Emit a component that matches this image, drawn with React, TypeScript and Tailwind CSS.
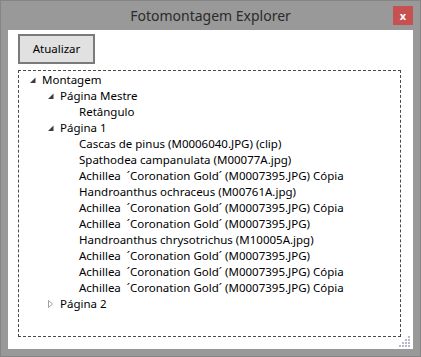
import React from "react";

type Node = { label: string; level: number; state?: "open" | "closed" };

const rows: Node[] = [
  { label: "Montagem", level: 0, state: "open" },
  { label: "Página Mestre", level: 1, state: "open" },
  { label: "Retângulo", level: 2 },
  { label: "Página 1", level: 1, state: "open" },
  { label: "Cascas de pinus (M0006040.JPG) (clip)", level: 2 },
  { label: "Spathodea campanulata (M00077A.jpg)", level: 2 },
  { label: "Achillea  ´Coronation Gold´ (M0007395.JPG) Cópia", level: 2 },
  { label: "Handroanthus ochraceus (M00761A.jpg)", level: 2 },
  { label: "Achillea  ´Coronation Gold´ (M0007395.JPG) Cópia", level: 2 },
  { label: "Achillea  ´Coronation Gold´ (M0007395.JPG)", level: 2 },
  { label: "Handroanthus chrysotrichus (M10005A.jpg)", level: 2 },
  { label: "Achillea  ´Coronation Gold´ (M0007395.JPG)", level: 2 },
  { label: "Achillea  ´Coronation Gold´ (M0007395.JPG) Cópia", level: 2 },
  { label: "Achillea  ´Coronation Gold´ (M0007395.JPG) Cópia", level: 2 },
  { label: "Página 2", level: 1, state: "closed" },
];

// indent per tree level, in px
const pad = ["pl-[8px]", "pl-[26px]", "pl-[45px]"];

function Glyph({ state }: { state?: "open" | "closed" }) {
  if (state === "open") {
    return (
      <svg width="12" height="16" viewBox="0 0 12 16">
        <path d="M8.5 5.5 L8.5 11 L3 11 Z" fill="#3c3c3c" />
      </svg>
    );
  }
  if (state === "closed") {
    return (
      <svg width="12" height="16" viewBox="0 0 12 16">
        <path d="M3.5 4.5 L7.5 8 L3.5 11.5 Z" fill="none" stroke="#a0a0a0" />
      </svg>
    );
  }
  return <span className="w-[12px]" />;
}

function ResizeGrip() {
  const dots = [
    [9, 1],
    [6, 4], [9, 4],
    [3, 7], [6, 7], [9, 7],
    [0, 10], [3, 10], [6, 10], [9, 10],
  ];
  return (
    <svg width="12" height="12" viewBox="0 0 12 12" className="absolute right-[2px] bottom-[2px]">
      {dots.map(([x, y], i) => (
        <rect key={i} x={x} y={y} width="2" height="2" fill="#b8b8c8" />
      ))}
    </svg>
  );
}

export default function App() {
  return (
    <div className="w-[421px] h-[357px] bg-[#999999] border border-[#858585] flex flex-col font-['Noto_Sans',sans-serif]">
      {/* title bar */}
      <div className="h-[29px] relative flex items-center justify-center">
        <span className="text-[14px] text-[#2b2b2b] leading-none pt-[1px]">Fotomontagem Explorer</span>
        <div className="absolute right-[7px] top-[5px] w-[20px] h-[19px] bg-[#c75050] flex items-center justify-center">
          <span className="text-white text-[11px] font-bold leading-none -mt-[1px]">x</span>
        </div>
      </div>

      {/* client area */}
      <div className="flex-1 mx-[7px] mb-[7px] bg-white relative flex flex-col pt-[4px] pl-[10px] pr-[12px] pb-[12px]">
        <button className="w-[77px] h-[30px] bg-[#e1e1e1] border-2 border-[#7a7a7a] text-[11.5px] text-black">
          Atualizar
        </button>
        <div className="mt-[6px] flex-1 border border-dashed border-[#4a4a4a] pt-[1px] text-[11.5px] text-black">
          {rows.map((r, i) => (
            <div key={i} className={`h-[16px] flex items-center ${pad[r.level]}`}>
              <Glyph state={r.state} />
              <span className="ml-[3px] leading-[16px] whitespace-pre">{r.label}</span>
            </div>
          ))}
        </div>
        <ResizeGrip />
      </div>
    </div>
  );
}
